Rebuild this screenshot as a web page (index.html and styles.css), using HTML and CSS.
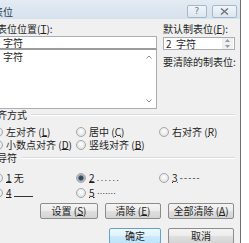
FILE: index.html
```html
<!DOCTYPE html>
<html>
<head>
<meta charset="utf-8">
<link rel="stylesheet" href="styles.css">
</head>
<body>
<div class="dialog">
  <div class="titlebar">
    <span class="title">制表位</span>
    <span class="tbtn help">?</span>
    <span class="tbtn close"><svg width="9" height="7" viewBox="0 0 9 7"><path d="M1 0.5 L8 6.5 M8 0.5 L1 6.5" stroke="#6d7580" stroke-width="1.4" fill="none"/></svg></span>
  </div>
  <div class="content">
    <div class="top">
      <div class="leftcol">
        <div class="label">制表位位置(<u>T</u>):</div>
        <div class="edit"><span class="num">2</span>字符</div>
        <div class="list">
          <div class="items"><div class="item"><span class="num">2</span>字符</div></div>
          <div class="scroll">
            <svg width="6" height="4" viewBox="0 0 6 4"><path d="M0.5 3.5 L3 1 L5.5 3.5" stroke="#8a8a8a" stroke-width="1" fill="none"/></svg>
            <svg width="6" height="4" viewBox="0 0 6 4"><path d="M0.5 0.5 L3 3 L5.5 0.5" stroke="#8a8a8a" stroke-width="1" fill="none"/></svg>
          </div>
        </div>
      </div>
      <div class="rightcol">
        <div class="label">默认制表位(<u>F</u>):</div>
        <div class="spin">
          <span class="spintext"><span class="num">2</span>字符</span>
          <span class="spinbtns">
            <svg width="5" height="3" viewBox="0 0 5 3"><path d="M0 3 L2.5 0 L5 3 Z" fill="#9a9a9a"/></svg>
            <svg width="5" height="3" viewBox="0 0 5 3"><path d="M0 0 L2.5 3 L5 0 Z" fill="#9a9a9a"/></svg>
          </span>
        </div>
        <div class="label clearlbl">要清除的制表位:</div>
      </div>
    </div>

    <div class="group"><span>对齐方式</span><i class="rule"></i></div>
    <div class="radios align">
      <label class="opt"><i class="radio"></i>左对齐 (<u>L</u>)</label>
      <label class="opt"><i class="radio"></i>居中 (<u>C</u>)</label>
      <label class="opt"><i class="radio"></i>右对齐 (<u>R</u>)</label>
      <label class="opt"><i class="radio"></i>小数点对齐 (<u>D</u>)</label>
      <label class="opt"><i class="radio"></i>竖线对齐 (<u>B</u>)</label>
    </div>

    <div class="group lead"><span>前导符</span><i class="rule"></i></div>
    <div class="radios leader">
      <label class="opt"><i class="radio"></i><u>1</u>&nbsp;无</label>
      <label class="opt"><i class="radio checked"></i><u>2</u>&nbsp;<span class="dots">......</span></label>
      <label class="opt"><i class="radio"></i><u>3</u>&nbsp;<span class="dashes">-----</span></label>
      <label class="opt"><i class="radio"></i><u>4</u>&nbsp;<span class="line"></span></label>
      <label class="opt"><i class="radio"></i><u>5</u>&nbsp;<span class="mdots">·······</span></label>
    </div>

    <div class="btnrow">
      <button class="btn w58">设置 (<u>S</u>)</button>
      <button class="btn w56">清除 (<u>E</u>)</button>
      <button class="btn w66">全部清除 (<u>A</u>)</button>
    </div>
    <div class="btnrow bottom">
      <button class="btn default w52">确定</button>
      <button class="btn w66">取消</button>
    </div>
  </div>
</div>
</body>
</html>
```

FILE: styles.css
```css
html, body {
  margin: 0;
  padding: 0;
  background: #ffffff;
  overflow: hidden;
}
body {
  width: 249px;
  height: 243px;
  font-family: "Noto Sans CJK SC", "Liberation Sans", sans-serif;
  font-size: 10px;
  color: #1e1e1e;
}
.dialog {
  margin-left: -20px;
  width: 261px;
  height: 243px;
  box-sizing: border-box;
  border-right: 1px solid #6a6f75;
  background: #f0f0f0;
}
.titlebar {
  height: 19px;
  box-sizing: border-box;
  padding: 5px 3px 1px 3px;
  display: flex;
  align-items: center;
  background: linear-gradient(#e3ebf3, #d5e1ec);
}
.title {
  line-height: 13px;
  font-size: 10px;
  color: #2b3a4a;
}
.tbtn {
  height: 13px;
  box-sizing: border-box;
  border: 1px solid #a6b7ca;
  border-radius: 2px;
  background: linear-gradient(#f1f5f9, #dce6ef);
  display: flex;
  align-items: center;
  justify-content: center;
}
.help {
  margin-left: auto;
  width: 20px;
  font-family: "DejaVu Sans", sans-serif;
  font-size: 9px;
  color: #6d7580;
  line-height: 11px;
}
.close {
  margin-left: 5px;
  width: 25px;
}
.content {
  padding: 0 5px 0 7px;
}
u {
  text-decoration: underline;
  text-underline-offset: 0px;
}
.label {
  line-height: 12px;
  margin-top: 4px;
  white-space: nowrap;
}
.num {
  display: inline-block;
  width: 10px;
}
.top {
  display: flex;
  gap: 6px;
}
.leftcol {
  width: 171px;
  display: flex;
  flex-direction: column;
}
.edit {
  margin-left: 2px;
  margin-top: 1px;
  height: 14px;
  box-sizing: border-box;
  border: 1px solid #abadb3;
  border-bottom: 2px solid #9a9c9e;
  background: #fff;
  padding-left: 3px;
  line-height: 11px;
}
.list {
  margin-left: 2px;
  height: 59px;
  box-sizing: border-box;
  border: 1px solid #abadb3;
  border-top: none;
  background: #fff;
  display: flex;
}
.items {
  flex: 1;
  padding: 1px 0 0 3px;
}
.item {
  line-height: 12px;
}
.scroll {
  width: 14px;
  display: flex;
  flex-direction: column;
  justify-content: space-between;
  align-items: center;
  padding: 5px 0 5px 0;
}
.rightcol {
  width: 72px;
  display: flex;
  flex-direction: column;
}
.spin {
  margin-top: 2px;
  height: 13px;
  box-sizing: border-box;
  border: 1px solid #abadb3;
  background: #fff;
  display: flex;
  align-items: center;
  padding-left: 2px;
}
.spintext {
  flex: 1;
  line-height: 11px;
}
.spinbtns {
  width: 11px;
  height: 11px;
  margin-right: 1px;
  display: flex;
  flex-direction: column;
  justify-content: space-around;
  align-items: center;
  background: #eef0f2;
}
.clearlbl {
  margin-top: 6px;
}
.group {
  display: flex;
  align-items: center;
  line-height: 12px;
}
.group .rule {
  flex: 1;
  height: 1px;
  margin-left: 4px;
  background: #d6dbe0;
  border-bottom: 1px solid #ffffff;
}
.group.lead {
  margin-top: 1px;
}
.radios {
  display: grid;
  grid-template-columns: 83px 83px 1fr;
  padding-left: 6px;
}
.radios.align {
  margin-top: 4px;
  grid-auto-rows: 13px;
}
.radios.leader {
  margin-top: 6px;
  grid-auto-rows: 15px;
}
.opt {
  display: flex;
  align-items: center;
  white-space: nowrap;
  line-height: 12px;
}
.radio {
  width: 10px;
  height: 10px;
  box-sizing: border-box;
  border-radius: 50%;
  border: 1px solid #a3a7ab;
  background: radial-gradient(circle at 50% 40%, #ffffff 0, #f0f0f0 40%, #d6d8da 100%);
  margin-right: 3px;
  flex: none;
}
.radio.checked {
  background: radial-gradient(circle, #2f3e4c 0, #3d4f60 2px, #9fb0bf 3px, #e4e8ec 100%);
}
.dots {
  font-family: "Liberation Sans", sans-serif;
  font-size: 9px;
  letter-spacing: 1.4px;
  color: #333;
}
.mdots {
  font-family: "Liberation Sans", sans-serif;
  font-size: 9px;
  letter-spacing: -0.3px;
  color: #333;
}
.dashes {
  font-family: "Liberation Sans", sans-serif;
  font-size: 9px;
  letter-spacing: 1.2px;
  color: #333;
}
.line {
  display: inline-block;
  width: 19px;
  height: 7px;
  border-bottom: 1px solid #333;
}
.btnrow {
  display: flex;
  justify-content: flex-end;
  gap: 7px;
  margin-top: 3px;
  padding-right: 1px;
}
.btnrow.bottom {
  margin-top: 9px;
}
.btn {
  height: 16px;
  box-sizing: border-box;
  border: 1px solid #8c8c8c;
  border-radius: 2px;
  background: linear-gradient(#f4f4f4 0%, #ececec 50%, #dfdfdf 51%, #d4d4d4 100%);
  font-family: "Noto Sans CJK SC", "Liberation Sans", sans-serif;
  font-size: 10px;
  line-height: 12px;
  padding: 0;
  color: #1e1e1e;
}
.btn.default {
  border-color: #5fa3c9;
  background: linear-gradient(#eef8fd 0%, #def2fc 50%, #cbeafb 51%, #bfe3f7 100%);
}
.w58 { width: 58px; }
.w56 { width: 56px; }
.w66 { width: 66px; }
.w52 { width: 52px; }
```
